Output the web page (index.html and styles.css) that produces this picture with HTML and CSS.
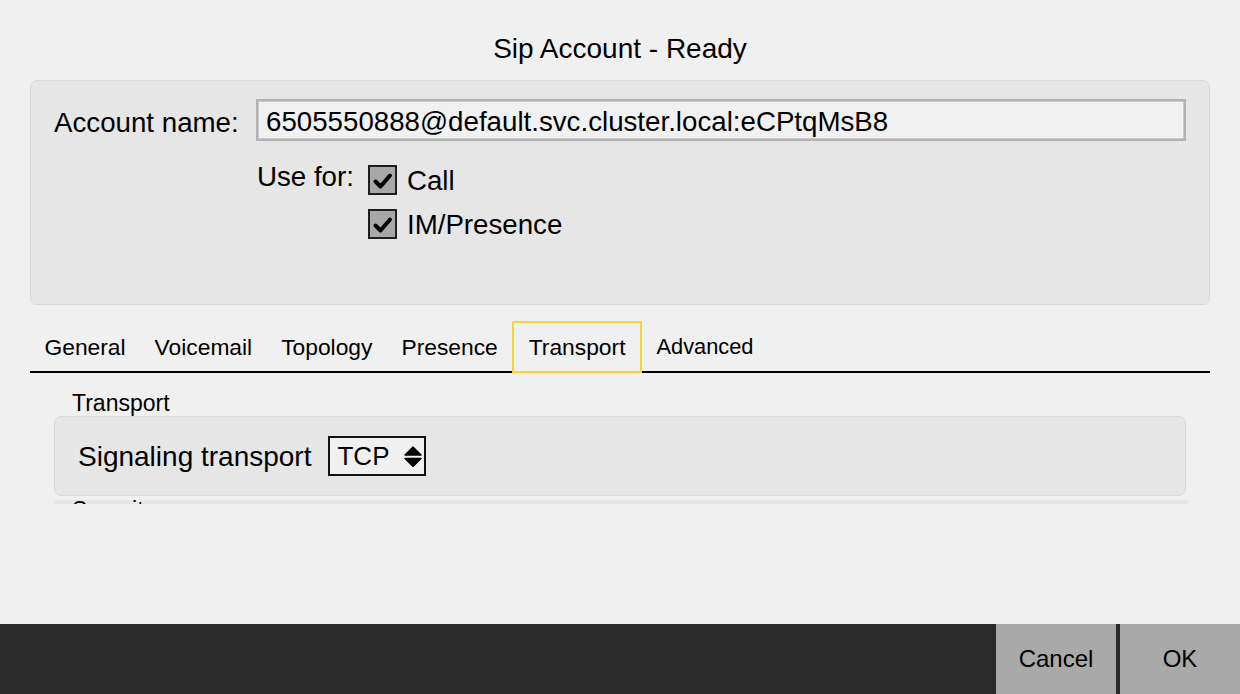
FILE: index.html
```html
<!DOCTYPE html>
<html lang="en">
<head>
<meta charset="utf-8">
<title>Sip Account - Ready</title>
<link rel="stylesheet" href="styles.css">
</head>
<body>
<div class="window">
  <div class="title">Sip Account - Ready</div>

  <div class="account-panel">
    <div class="account-row">
      <div class="account-label">Account name:</div>
      <div class="text-field">6505550888@default.svc.cluster.local:eCPtqMsB8</div>
    </div>
    <div class="usefor-row">
      <div class="usefor-label">Use for:</div>
      <div class="checks">
        <div class="check-row">
          <span class="checkbox"><svg viewBox="0 0 25 26" width="25" height="26"><polyline points="5.5,14.5 10.5,19.5 20,8.5" fill="none" stroke="#000" stroke-width="4" stroke-linecap="round" stroke-linejoin="round"/></svg></span>
          <span class="check-text">Call</span>
        </div>
        <div class="check-row">
          <span class="checkbox"><svg viewBox="0 0 25 26" width="25" height="26"><polyline points="5.5,14.5 10.5,19.5 20,8.5" fill="none" stroke="#000" stroke-width="4" stroke-linecap="round" stroke-linejoin="round"/></svg></span>
          <span class="check-text">IM/Presence</span>
        </div>
      </div>
    </div>
  </div>

  <div class="tabbar">
    <div class="tab">General</div>
    <div class="tab">Voicemail</div>
    <div class="tab">Topology</div>
    <div class="tab">Presence</div>
    <div class="tab tab-active">Transport</div>
    <div class="tab tab-thin">Advanced</div>
  </div>

  <div class="tab-content">
    <div class="group-label">Transport</div>
    <div class="group-box">
      <div class="field-label">Signaling transport</div>
      <div class="combo">
        <span class="combo-text">TCP</span>
        <svg class="combo-arrows" viewBox="0 0 18 21" width="18" height="21"><polygon points="9,1 17,9 1,9" fill="#000" stroke="#000" stroke-width="1.4" stroke-linejoin="round"/><polygon points="1,12.5 17,12.5 9,20.5" fill="#000" stroke="#000" stroke-width="1.4" stroke-linejoin="round"/></svg>
      </div>
    </div>
    <div class="clip-strip">
      <div class="group-label clipped">Security</div>
    </div>
  </div>

  <div class="button-bar">
    <div class="btn">Cancel</div>
    <div class="btn">OK</div>
  </div>
</div>
</body>
</html>
```

FILE: styles.css
```css
* { box-sizing: border-box; }

html, body {
  margin: 0;
  padding: 0;
}

body {
  background: #f0f0f0;
  font-family: "Liberation Sans", Arial, Helvetica, sans-serif;
  color: #000;
}

.window {
  width: 1240px;
  height: 694px;
  display: flex;
  flex-direction: column;
  overflow: hidden;
}

.title {
  height: 80px;
  padding-top: 33px;
  font-size: 28px;
  line-height: 32px;
  text-align: center;
}

.account-panel {
  margin: 0 30px;
  height: 225px;
  border: 1px solid #dadada;
  border-radius: 7px;
  background: #e6e6e6;
  padding: 18px 23px 0 23px;
}

.account-row {
  display: flex;
  align-items: flex-start;
  height: 42px;
}

.account-label {
  width: 202px;
  font-size: 27.7px;
  line-height: 42px;
  padding-top: 3px;
  flex: none;
}

.text-field {
  flex: 1;
  height: 42px;
  border: 2px solid #b3b3b3;
  box-shadow: inset 0 0 0 1px #cacaca;
  background: #f1f1f1;
  padding: 3px 0 0 8px;
  font-size: 27.7px;
  line-height: 35px;
  white-space: nowrap;
  overflow: hidden;
}

.usefor-row {
  display: flex;
  margin-top: 24px;
  padding-left: 203px;
}

.usefor-label {
  font-size: 27.7px;
  line-height: 26px;
  margin-top: -1px;
  margin-right: 14px;
}

.checks {
  display: flex;
  flex-direction: column;
  gap: 14px;
}

.check-row {
  display: flex;
  align-items: center;
  height: 30px;
}

.checkbox {
  width: 29px;
  height: 30px;
  border: 2px solid #1e1e1e;
  background: #a8a8a8;
  display: flex;
  align-items: center;
  justify-content: center;
  margin-right: 10px;
}

.checkbox svg {
  display: block;
}

.check-text {
  font-size: 27.7px;
  line-height: 30px;
  padding-top: 2px;
}

.tabbar {
  margin: 16px 30px 0;
  display: flex;
  border-bottom: 2px solid #000;
  height: 52px;
}

.tab {
  padding: 3px 14.5px 0;
  height: 50px;
  line-height: 46px;
  font-size: 22.8px;
}

.tab-active {
  height: 52px;
  margin-bottom: -2px;
  border: 2px solid #fcd232;
  padding: 1px 14.5px 0;
  line-height: 46px;
}

.tab-thin {
  font-size: 21.8px;
}

.tab-content {
  padding: 18px 0 0 54px;
}

.group-label {
  padding-left: 18px;
  font-size: 23px;
  line-height: 25px;
}

.group-box {
  width: 1132px;
  height: 80px;
  border: 1px solid #dadada;
  border-radius: 7px;
  background: #e6e6e6;
  padding-left: 23px;
  display: flex;
  align-items: center;
}

.field-label {
  font-size: 28px;
  line-height: 34px;
  padding-top: 2px;
  margin-right: 17px;
}

.combo {
  width: 98px;
  height: 40px;
  border: 2px solid #111;
  background: #f0f0f0;
  display: flex;
  align-items: center;
  padding-left: 7px;
}

.combo-text {
  font-size: 26px;
  line-height: 36px;
  width: 67px;
}

.combo-arrows {
  display: block;
}

.clip-strip {
  margin-top: 4px;
  width: 1134px;
  height: 4px;
  overflow: hidden;
  background: #e6e6e6;
}

.clipped {
  line-height: 22px;
  margin-top: -1px;
}

.button-bar {
  margin-top: auto;
  height: 70px;
  background: #2b2b2b;
  display: flex;
  justify-content: flex-end;
  gap: 4px;
}

.btn {
  width: 120px;
  height: 70px;
  background: #a9a9a9;
  font-size: 24px;
  line-height: 70px;
  text-align: center;
}
```
